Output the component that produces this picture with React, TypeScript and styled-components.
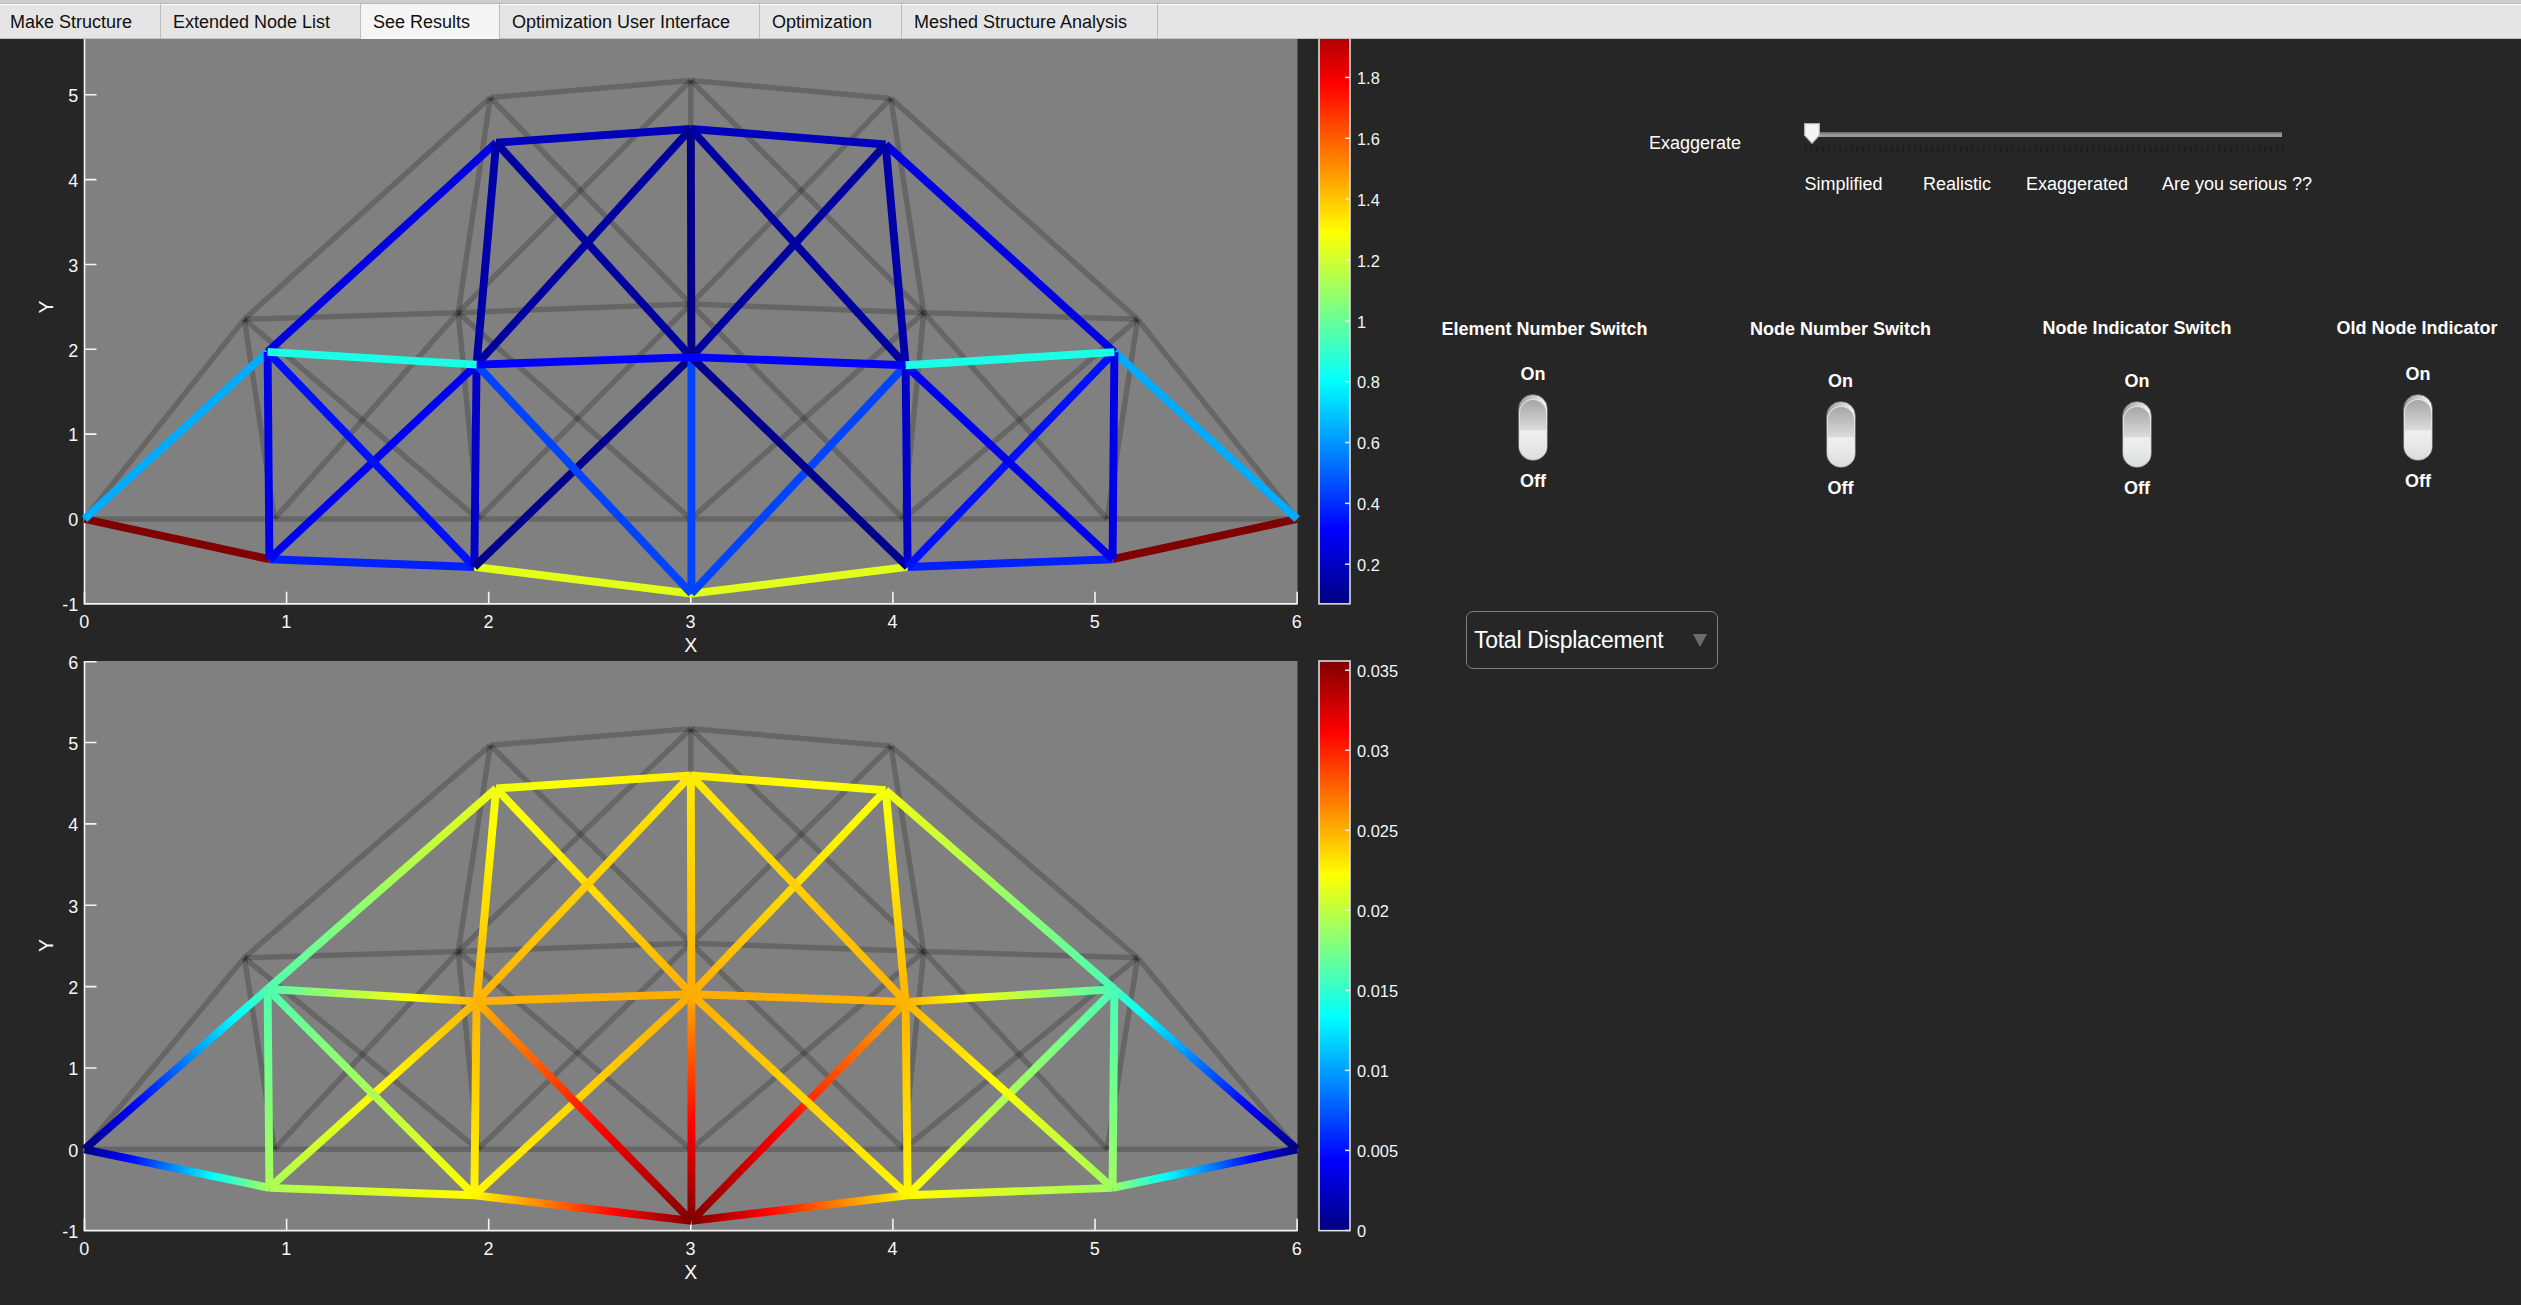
import React from 'react';
import styled, { createGlobalStyle } from 'styled-components';

const GlobalStyle = createGlobalStyle`
  html, body { margin: 0; padding: 0; background: #262626; overflow: hidden; }
  * { box-sizing: border-box; }
`;

const Window = styled.div`
  width: 2521px;
  height: 1305px;
  overflow: hidden;
  display: flex;
  flex-direction: column;
  background: #262626;
  color: #fff;
  font-family: 'Liberation Sans', Arial, sans-serif;
  font-size: 18px;
  line-height: 20px;
`;

const TabBar = styled.div`
  height: 39px;
  flex: none;
  display: flex;
  padding-top: 4px;
  background: linear-gradient(#cdcdcd 0 3px, #b9b9b9 3px 4px, #fff 4px 5px, #e5e5e5 5px);
  border-bottom: 1px solid #c0c0c0;
  color: #101010;
`;

const Tab = styled.div<{ $width: number; $active?: boolean }>`
  width: ${(p) => p.$width}px;
  height: 35px;
  padding: 8px 0 0 12px;
  white-space: nowrap;
  border-right: 1px solid #bdbdbd;
  background: ${(p) => (p.$active ? '#f5f5f5' : 'transparent')};

  &:first-child {
    padding-left: 10px;
  }
`;

const Body = styled.div`
  display: flex;
  flex: 1;
`;

const Charts = styled.div`
  width: 1420px;
  flex: none;
  display: flex;
  flex-direction: column;
`;

const ChartSvg = styled.svg<{ $clip: boolean }>`
  display: block;
  flex: none;
  overflow: ${(p) => (p.$clip ? 'hidden' : 'visible')};
  font-family: 'Liberation Sans', Arial, sans-serif;
`;

const Panel = styled.div`
  flex: 1;
  min-width: 0;
  display: flex;
  flex-direction: column;
`;

const SliderRow = styled.div`
  display: flex;
  margin-top: 84px;
  padding-left: 229px;
`;

const SliderCaption = styled.div`
  width: 155px;
  padding-top: 10px;
`;

const SliderBody = styled.div`
  display: flex;
  flex-direction: column;
  gap: 21px;
`;

const SliderLabels = styled.div`
  display: grid;
  grid-template-columns: 118.5px 103px 136px 160px;
  padding-left: 0.5px;
  white-space: nowrap;
`;

const SwitchRow = styled.div`
  display: flex;
  margin-top: 124px;
  height: 180px;
  font-weight: bold;
`;

const SwitchColumn = styled.div<{ $width: number; $indent?: number; $drop?: number }>`
  width: ${(p) => p.$width}px;
  padding-left: ${(p) => p.$indent ?? 0}px;
  padding-top: ${(p) => p.$drop ?? 0}px;
  display: flex;
  flex-direction: column;
  align-items: center;
  white-space: nowrap;
`;

const SwitchStack = styled.div<{ $gap: number; $pull?: number }>`
  display: flex;
  flex-direction: column;
  align-items: center;
  gap: 10px;
  margin-top: ${(p) => p.$gap}px;
  margin-right: ${(p) => p.$pull ?? 0}px;
`;

const Track = styled.div`
  width: 30px;
  height: 67px;
  padding: 4px 0 0 0;
  border: 1px solid #6a6a6a;
  border-radius: 15px;
  background: linear-gradient(90deg, #9c9c9c, #cacaca 50%, #fafafa);
`;

const Knob = styled.div`
  height: 61px;
  border: 1px solid #e2e2e2;
  border-bottom-color: #cfcfcf;
  border-radius: 14px;
  background: linear-gradient(#a6a6a6, #dadada 50%, #efefef 52%, #eaeaea 70%, #dcdedf);
`;

const Select = styled.div`
  display: flex;
  align-items: center;
  justify-content: space-between;
  width: 252px;
  height: 58px;
  margin: 113px 0 0 46px;
  padding: 0 10.5px 1px 7px;
  border: 1px solid #808080;
  border-radius: 7px;
  font-size: 23px;
  letter-spacing: -0.27px;
  line-height: 28px;
`;

const Arrow = styled.div`
  width: 0;
  height: 0;
  margin-top: 1px;
  border-left: 7.5px solid transparent;
  border-right: 7.5px solid transparent;
  border-top: 13px solid #6c6c6c;
`;

/* ---------- truss model ---------- */

type Pt = [number, number];

const original: Record<string, Pt> = {
  O: [0, 0], A: [0.791, 2.355], B: [2.008, 4.967], C: [3, 5.169], D: [1.849, 2.432], E: [3, 2.533],
  F: [0.94, 0], G: [1.947, 0], H: [3, 0],
  b: [3.99, 4.957], d: [4.153, 2.432], a: [5.211, 2.355], g: [4.053, 0], f: [5.06, 0], o: [6, 0],
};

const deformed: Record<string, Pt> = {
  O: [0, 0], A: [0.906, 1.97], B: [2.037, 4.435], C: [3, 4.597], D: [1.94, 1.819], E: [3.003, 1.908],
  F: [0.915, -0.474], G: [1.929, -0.565], H: [3.003, -0.88],
  b: [3.964, 4.414], d: [4.063, 1.812], a: [5.096, 1.967], g: [4.073, -0.565], f: [5.087, -0.474], o: [6, 0],
};

/* Displacement at each node as a fraction of the maximum */
const level: Record<string, number> = {
  O: 0, A: 0.452, B: 0.61, C: 0.645, D: 0.7, E: 0.705, F: 0.542, G: 0.632, H: 1,
  b: 0.615, d: 0.7, a: 0.445, g: 0.632, f: 0.53, o: 0,
};

/* Members in paint order, with their stress colour */
const members: [string, string, string][] = [
  ['O', 'F', '#800000'], ['F', 'G', '#0020ff'], ['G', 'H', '#e2ff1a'], ['H', 'g', '#e2ff1a'],
  ['g', 'f', '#0020ff'], ['f', 'o', '#800000'],
  ['O', 'A', '#00acff'], ['A', 'B', '#0000e0'], ['B', 'C', '#0000bd'], ['C', 'b', '#0000bd'],
  ['b', 'a', '#0000e0'], ['a', 'o', '#00acff'],
  ['A', 'F', '#0000e8'], ['F', 'D', '#0000f0'], ['A', 'G', '#0010ff'], ['D', 'G', '#0000c8'],
  ['G', 'E', '#00008c'], ['D', 'H', '#0044ff'], ['E', 'H', '#0044ff'], ['d', 'H', '#0044ff'],
  ['E', 'g', '#00008c'], ['d', 'g', '#0000c8'], ['a', 'g', '#0010ff'], ['d', 'f', '#0000f0'], ['a', 'f', '#0000e8'],
  ['B', 'D', '#0000a8'], ['B', 'E', '#0000a0'], ['b', 'E', '#0000a0'], ['D', 'C', '#0000a0'], ['C', 'E', '#000088'],
  ['C', 'd', '#0000a0'], ['b', 'd', '#0000a8'],
  ['D', 'E', '#0000ff'], ['E', 'd', '#0000ff'], ['A', 'D', '#1affe5'], ['d', 'a', '#1affe5'],
];

const jet = (t: number) => {
  const ch = (c: number) => Math.round(255 * Math.max(0, Math.min(1, 1.5 - Math.abs(4 * t - c))));
  return `rgb(${ch(3)},${ch(2)},${ch(1)})`;
};

const jetKnots = [0, 0.125, 0.375, 0.625, 0.875, 1];

interface ChartProps {
  top: number;
  height: number;
  plotTop: number;
  zeroY: number;
  unit: number;
  smooth?: boolean;
  yLabelY: number;
  barTicks: { label: string; y: number }[];
  id: string;
}

const X0 = 84.5;
const XU = 202.1;

function Chart({ top, height, plotTop, zeroY, unit, smooth, yLabelY, barTicks, id }: ChartProps) {
  const px = (p: Pt): Pt => [X0 + XU * p[0], zeroY - unit * p[1]];
  const bottom = zeroY + unit;
  const right = X0 + 6 * XU;
  return (
    <ChartSvg $clip={plotTop < top} width={1420} height={height} viewBox={`0 ${top} 1420 ${height}`}>
      <defs>
        <linearGradient id={`${id}bar`} x1="0" y1="1" x2="0" y2="0">
          {jetKnots.map((t) => <stop key={t} offset={t} stopColor={jet(t)} />)}
        </linearGradient>
        {smooth && members.map(([m, n]) => {
          const p = px(deformed[m]);
          const q = px(deformed[n]);
          return (
            <linearGradient key={m + n} id={`${id}${m}-${n}`} gradientUnits="userSpaceOnUse" x1={p[0]} y1={p[1]} x2={q[0]} y2={q[1]}>
              {Array.from({ length: 17 }, (_, i) => (
                <stop key={i} offset={i / 16} stopColor={jet(level[m] + ((level[n] - level[m]) * i) / 16)} />
              ))}
            </linearGradient>
          );
        })}
      </defs>
      <rect x={X0} y={plotTop} width={right - X0 + 0.4} height={bottom - plotTop} fill="#808080" />
      <g stroke="#f4f4f4" strokeWidth="1.6" fill="none">
        <path d={`M${X0} ${plotTop}V${bottom}H${right + 0.5}`} />
        {[0, 1, 2, 3, 4, 5, 6].map((v) => (
          <path key={v} d={`M${X0 + XU * v} ${bottom}v-12M${X0} ${zeroY - unit * v + (v === 6 ? 0.6 : 0)}h12`} />
        ))}
      </g>
      <g stroke="#000" strokeOpacity="0.2" strokeWidth="5.5">
        {members.map(([m, n]) => {
          const p = px(original[m]);
          const q = px(original[n]);
          return <line key={m + n} x1={p[0]} y1={p[1]} x2={q[0]} y2={q[1]} />;
        })}
      </g>
      <g strokeWidth="7.9">
        {members.map(([m, n, c]) => {
          const p = px(deformed[m]);
          const q = px(deformed[n]);
          return <line key={m + n} x1={p[0]} y1={p[1]} x2={q[0]} y2={q[1]} stroke={smooth ? `url(#${id}${m}-${n})` : c} />;
        })}
      </g>
      <g fill="#f6f6f6" fontSize="18" textAnchor="middle">
        {[0, 1, 2, 3, 4, 5, 6].map((v) => (
          <text key={v} x={X0 + XU * v - 0.3} y={bottom + 24.5}>{v}</text>
        ))}
        <g textAnchor="end">
          {[-1, 0, 1, 2, 3, 4, 5, 6].filter((v) => zeroY - unit * v > top + 3).map((v) => (
            <text key={v} x={78.3} y={zeroY - unit * v + 7.3}>{v}</text>
          ))}
        </g>
        <text x={X0 + 3 * XU} y={bottom + 48.3} fontSize="19.5">X</text>
        <text transform={`translate(53 ${yLabelY}) rotate(-90)`} fontSize="19.5">Y</text>
      </g>
      <rect x={1319} y={plotTop} width={31} height={bottom - plotTop} fill={`url(#${id}bar)`} stroke="#e8e8e8" strokeWidth="1.5" />
      <g fill="#f6f6f6" fontSize="16.4">
        {barTicks.map((t) => (
          <g key={t.label}>
            <path d={`M1350 ${t.y}h-5`} stroke="#e8e8e8" strokeWidth="1.5" />
            <text x={1357} y={t.y + 6.7}>{t.label}</text>
          </g>
        ))}
      </g>
    </ChartSvg>
  );
}

const stressTicks = ['0.2', '0.4', '0.6', '0.8', '1', '1.2', '1.4', '1.6', '1.8'].map((label, i) => ({ label, y: 564.2 - 60.85 * i }));
const dispTicks = ['0', '0.005', '0.01', '0.015', '0.02', '0.025', '0.03', '0.035'].map((label, i) => ({ label, y: 1230.4 - 80.02 * i }));

const tabs: [string, number][] = [
  ['Make Structure', 161], ['Extended Node List', 200], ['See Results', 139],
  ['Optimization User Interface', 260], ['Optimization', 142], ['Meshed Structure Analysis', 256],
];

function ExaggerateSlider() {
  return (
    <svg width="517" height="30" viewBox="0 0 517 30">
      <rect x="8" y="9" width="470" height="5" fill="#999" />
      <rect x="8" y="9" width="470" height="1.6" fill="#727272" />
      {Array.from({ length: 84 }, (_, i) => (
        <rect key={i} x={1 + i * 5.747} y="23" width="1.3" height="7" fill="#1b1b1b" />
      ))}
      <path d="M0.6 0.6H15.4V12.3L8 20.4L0.6 12.3Z" fill="#f5f5f5" stroke="#b0b0b0" strokeWidth="1.2" />
    </svg>
  );
}

interface SwitchProps { label: string; width: number; indent?: number; drop?: number; gap: number; pull?: number }

function ToggleSwitch({ label, width, indent, drop, gap, pull }: SwitchProps) {
  return (
    <SwitchColumn $width={width} $indent={indent} $drop={drop}>
      <div>{label}</div>
      <SwitchStack $gap={gap} $pull={pull}>
        <div>On</div>
        <Track><Knob /></Track>
        <div>Off</div>
      </SwitchStack>
    </SwitchColumn>
  );
}

export default function App() {
  return (
    <>
      <GlobalStyle />
      <Window>
        <TabBar>
          {tabs.map(([name, width], i) => (
            <Tab key={name} $width={width} $active={i === 2}>{name}</Tab>
          ))}
        </TabBar>
        <Body>
          <Charts>
            <Chart id="s" top={39} height={619} plotTop={9.7} zeroY={519} unit={84.85} yLabelY={307} barTicks={stressTicks} />
            <Chart id="d" top={658} height={647} plotTop={661} zeroY={1149.3} unit={81.35} yLabelY={945.6} smooth barTicks={dispTicks} />
          </Charts>
          <Panel>
            <SliderRow>
              <SliderCaption>Exaggerate</SliderCaption>
              <SliderBody>
                <ExaggerateSlider />
                <SliderLabels>
                  <span>Simplified</span>
                  <span>Realistic</span>
                  <span>Exaggerated</span>
                  <span>Are you serious ??</span>
                </SliderLabels>
              </SliderBody>
            </SliderRow>
            <SwitchRow>
              <ToggleSwitch label="Element Number Switch" width={249} drop={1} gap={25} pull={23} />
              <ToggleSwitch label="Node Number Switch" width={343} drop={1} gap={32} />
              <ToggleSwitch label="Node Indicator Switch" width={250} gap={33} />
              <ToggleSwitch label="Old Node Indicator" width={259} indent={51} gap={26} pull={-2} />
            </SwitchRow>
            <Select>
              Total Displacement
              <Arrow />
            </Select>
          </Panel>
        </Body>
      </Window>
    </>
  );
}
